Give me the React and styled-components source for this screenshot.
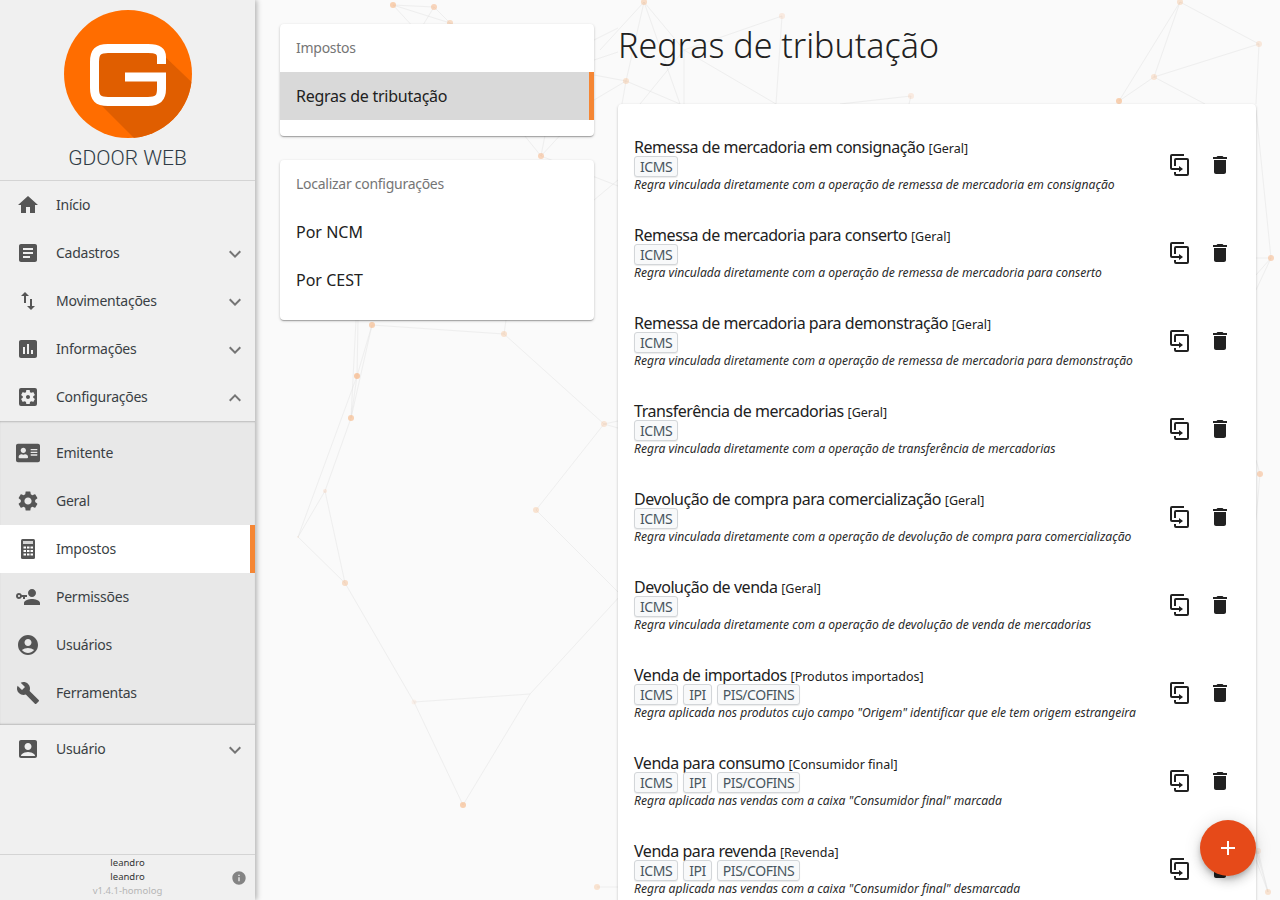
import React from "react";
import styled, { createGlobalStyle } from "styled-components";
import {
  MdHome, MdArticle, MdSwapVert, MdAssessment, MdSettingsApplications, MdSettings,
  MdAccountCircle, MdBuild, MdAccountBox, MdExpandMore, MdExpandLess, MdInfo, MdDelete, MdAdd,
} from "react-icons/md";
import { FaAddressCard } from "react-icons/fa";

const Global = createGlobalStyle`
  html, body { margin: 0; padding: 0; height: 100%; overflow: hidden; }
  body { font-family: "Noto Sans", "Open Sans", sans-serif; color: #212121; background: #fafafa; }
  * { box-sizing: border-box; }
`;

const Shell = styled.div`
  display: flex;
  height: 900px;
  overflow: hidden;
`;

const Sidebar = styled.aside`
  width: 255px;
  flex-shrink: 0;
  height: 100%;
  display: flex;
  flex-direction: column;
  background: #f0f0f0;
  box-shadow: 2px 0 5px rgba(0, 0, 0, 0.28);
  position: relative;
  z-index: 2;
`;

const Brand = styled.div`
  height: 181px;
  padding-top: 10px;
  display: flex;
  flex-direction: column;
  align-items: center;
  border-bottom: 1px solid #d4d4d4;
`;

const BrandName = styled.div`
  margin-top: 8px;
  font-family: Roboto, sans-serif;
  font-weight: 300;
  font-size: 21px;
  line-height: 24px;
  color: #2f3b45;
`;

const MenuRow = styled.div`
  height: 48px;
  display: flex;
  align-items: center;
  padding: 0 8px 0 16px;
  position: relative;
  font-size: 14px;
  color: #3a3f44;
  background: ${(p) => (p.$active ? "#fff" : "transparent")};
  ${(p) => p.$active && "box-shadow: inset -5px 0 0 #f58634;"}
`;

const MenuIcon = styled.span`
  width: 24px;
  height: 24px;
  margin-right: 16px;
  display: flex;
  align-items: center;
  justify-content: center;
  color: #555;
  font-size: 24px;
`;

const MenuLabel = styled.span`
  flex: 1;
  position: relative;
  top: -1px;
  letter-spacing: -0.25px;
`;

const Chevron = styled.span`
  display: flex;
  color: #757575;
  font-size: 24px;
  position: relative;
  top: 1px;
`;

const SubMenu = styled.div`
  background: #e8e8e8;
  padding: 8px 0;
  box-shadow: inset 0 2px 2px -1px rgba(0, 0, 0, 0.2), inset 0 -2px 2px -1px rgba(0, 0, 0, 0.2);
`;

const SideFooter = styled.footer`
  margin-top: auto;
  height: 46px;
  border-top: 1px solid #d4d4d4;
  position: relative;
  text-align: center;
  font-size: 9.5px;
  line-height: 13.5px;
  padding-top: 1px;
  color: #333;
`;

const Version = styled.div`
  margin-top: 1px;
  color: #b5b5b5;
`;

const InfoButton = styled.span`
  position: absolute;
  right: 8px;
  top: 15px;
  display: flex;
  font-size: 16px;
  color: #848484;
`;

const Main = styled.main`
  flex: 1;
  position: relative;
  background: #fafafa;
  overflow: hidden;
  display: grid;
  grid-template-columns: 314px 638px;
  column-gap: 24px;
  padding: 24px 24px 0 25px;
  align-items: start;
`;

const Network = styled.svg`
  position: absolute;
  left: 0;
  top: 0;
  width: 1025px;
  height: 900px;
`;

const SideColumn = styled.div`
  position: relative;
  display: flex;
  flex-direction: column;
  gap: 24px;
`;

const Card = styled.section`
  background: #fff;
  border-radius: 4px;
  box-shadow: 0 1px 3px rgba(0, 0, 0, 0.2), 0 1px 1px rgba(0, 0, 0, 0.14), 0 2px 1px -1px rgba(0, 0, 0, 0.12);
`;

const NavCard = styled(Card)`
  padding-bottom: 16px;
`;

const NavHeader = styled.div`
  height: 48px;
  line-height: 47px;
  padding: 0 16px;
  font-size: 14px;
  letter-spacing: -0.27px;
  color: #757575;
`;

const NavItem = styled.div`
  height: 48px;
  line-height: 49px;
  padding: 0 16px;
  font-size: 16px;
  color: #212121;
  background: ${(p) => (p.$selected ? "#d9d9d9" : "transparent")};
  ${(p) => p.$selected && "letter-spacing: -0.25px; box-shadow: inset -5px 0 0 #f58634;"}
`;

const Content = styled.div`
  position: relative;
`;

const Title = styled.h1`
  margin: 0;
  height: 80px;
  font-family: "Noto Sans", sans-serif;
  font-weight: 300;
  font-size: 34px;
  line-height: 43px;
  color: #212121;
`;

const RulesCard = styled(Card)`
  padding-top: 17px;
  min-height: 830px;
`;

const RuleRow = styled.div`
  height: 88px;
  display: flex;
  align-items: center;
  padding: 0 16px;
`;

const RuleText = styled.div`
  flex: 1;
  min-width: 0;
  padding-bottom: 1px;
`;

const RuleTitle = styled.div`
  height: 20px;
  font-size: 16px;
  line-height: 20px;
  letter-spacing: -0.45px;
  color: #212121;
  white-space: nowrap;
`;

const RuleScope = styled.span`
  font-size: 12.5px;
  line-height: 1;
  letter-spacing: 0;
`;

const TagRow = styled.div`
  display: flex;
  gap: 5px;
  height: 21px;
  margin-top: -1px;
`;

const Tag = styled.span`
  height: 21px;
  padding: 0 5px;
  border: 1px solid #d3d6d9;
  border-radius: 3px;
  background: #f8f9fa;
  box-shadow: 0 1px 1px rgba(0, 0, 0, 0.08);
  font-size: 14px;
  line-height: 19px;
  letter-spacing: -0.45px;
  color: #495660;
`;

const RuleHint = styled.div`
  height: 15px;
  font-size: 12.1px;
  line-height: 15px;
  font-style: italic;
  color: #2a2a2a;
  white-space: nowrap;
`;

const IconButton = styled.button`
  width: 40px;
  height: 40px;
  padding: 0;
  border: 0;
  background: none;
  display: flex;
  align-items: center;
  justify-content: center;
  font-size: 24px;
  color: #212121;
`;

const Fab = styled.button`
  position: absolute;
  right: 24px;
  bottom: 24px;
  width: 56px;
  height: 56px;
  padding: 0;
  border: 0;
  border-radius: 50%;
  background: #e64a19;
  color: #fff;
  font-size: 24px;
  display: flex;
  align-items: center;
  justify-content: center;
  box-shadow: 0 3px 5px -1px rgba(0, 0, 0, 0.2), 0 6px 10px rgba(0, 0, 0, 0.14), 0 1px 18px rgba(0, 0, 0, 0.12);
`;

const Logo = () => (
  <svg width="128" height="128" viewBox="64 10 128 128">
    <defs>
      <clipPath id="logoClip"><circle cx="128" cy="74" r="64" /></clipPath>
    </defs>
    <circle cx="128" cy="74" r="64" fill="#ff6d00" />
    <polygon clipPath="url(#logoClip)" fill="#e05e00" points="158,50 200,90 150,150 142,146 100,104 95,52" />
    <path
      d="M161.500 64V57C161.500 50.500 157 48.500 148 48.500H108C98 48.500 94.500 52 94.500 62V88C94.500 98 98 101.500 108 101.500H148C158 101.500 161.500 98 161.500 89V77H125"
      fill="none"
      stroke="#fff"
      strokeWidth="9"
    />
  </svg>
);

const KeyUser = () => (
  <svg width="24" height="24" viewBox="0 0 24 24" fill="currentColor">
    <path d="M11 10V12H9V14H7V12H5.800C5.400 13.200 4.300 14 3 14C1.300 14 0 12.700 0 11S1.300 8 3 8C4.300 8 5.400 8.800 5.800 10H11M3 10C2.400 10 2 10.400 2 11S2.400 12 3 12 4 11.600 4 11 3.600 10 3 10M16 14C18.700 14 24 15.300 24 18V20H8V18C8 15.300 13.300 14 16 14M16 12C13.800 12 12 10.200 12 8S13.800 4 16 4 20 5.800 20 8 18.200 12 16 12Z" />
  </svg>
);

const CalculatorIcon = () => (
  <svg width="24" height="24" viewBox="0 0 24 24">
    <rect x="5" y="2" width="14" height="20" rx="1.500" fill="currentColor" />
    <rect x="7" y="4" width="10" height="3" fill="#fff" opacity="0.75" />
    {[9, 12.500, 16].map((x) =>
      [9.500, 13, 16.500].map((y) => <rect key={`${x}-${y}`} x={x - 1.500} y={y} width="2.500" height="2" fill="#fff" />)
    )}
  </svg>
);

const CopyIcon = () => (
  <svg width="24" height="24" viewBox="0 0 24 24" fill="currentColor">
    <path d="M11,17H4A2,2 0 0,1 2,15V3A2,2 0 0,1 4,1H16V3H4V15H11V13L15,16L11,19V17M19,21V7H8V13H6V7A2,2 0 0,1 8,5H19A2,2 0 0,1 21,7V21A2,2 0 0,1 19,23H8A2,2 0 0,1 6,21V19H8V21H19Z" />
  </svg>
);

const nodes = [
  [393, 5, 3, 0.7], [434, 7, 3, 0.6], [450, 23, 3, 0.5], [541, 156, 3, 0.6], [372, 325, 3, 0.7],
  [504, 334, 3, 0.4], [357, 376, 3, 0.8], [351, 418, 3, 0.7], [325, 491, 2, 0.25], [298, 537, 1, 0.15],
  [345, 583, 3, 0.5], [414, 702, 2.500, 0.15], [463, 805, 3, 0.7], [536, 510, 3, 0.4], [604, 424, 3, 0.35],
  [621, 595, 3, 0.4], [597, 887, 3, 0.4], [644, 2, 3, 0.5], [782, 16, 3, 0.25], [626, 81, 3, 0.4],
  [911, 96, 3, 0.25], [1180, 2, 3, 0.4], [1259, 44, 3, 0.3], [1154, 77, 3, 0.35], [1119, 101, 3, 0.7],
  [1271, 258, 3, 0.6], [1260, 474, 3, 0.6], [1268, 892, 3, 0.4], [1258, 851, 3, 0.25],
];

const lines = [
  [393, 5, 434, 7], [393, 5, 450, 23], [434, 7, 450, 23], [434, 7, 420, 30], [393, 5, 416, 30], [450, 23, 480, 40],
  [541, 156, 520, 130], [541, 156, 546, 130], [541, 156, 565, 130], [541, 156, 618, 186], [594, 40, 618, 28], [594, 60, 618, 52],
  [594, 75, 626, 81], [594, 100, 626, 81], [594, 200, 618, 180], [644, 2, 600, 50], [644, 2, 626, 81], [644, 2, 680, 104],
  [644, 2, 684, 50], [782, 16, 684, 50], [684, 50, 684, 104], [684, 50, 776, 104], [782, 16, 776, 104], [626, 81, 680, 104],
  [626, 81, 622, 104], [684, 50, 640, 104], [911, 96, 909, 104], [911, 96, 840, 104],
  [1180, 2, 1259, 44], [1180, 2, 1154, 77], [1180, 2, 1119, 101], [1259, 44, 1154, 77], [1259, 44, 1256, 104],
  [1154, 77, 1119, 101], [1154, 77, 1205, 104],
  [372, 325, 357, 376], [372, 325, 351, 418], [358, 320, 357, 376], [356, 320, 351, 418], [357, 376, 351, 418], [351, 418, 325, 491],
  [325, 491, 298, 537], [298, 537, 345, 583], [325, 491, 345, 583], [298, 537, 357, 376], [345, 583, 414, 702],
  [414, 702, 463, 805], [414, 702, 530, 694], [530, 694, 463, 805], [530, 694, 621, 595], [536, 510, 621, 595],
  [536, 510, 604, 424], [604, 424, 504, 334], [372, 325, 504, 334], [504, 334, 506, 320], [604, 424, 618, 421], [604, 424, 618, 428],
  [597, 887, 618, 887], [1271, 258, 1256, 258], [1271, 258, 1256, 275], [1271, 258, 1256, 290], [1271, 258, 1256, 110],
  [1260, 474, 1256, 520], [1260, 474, 1256, 460], [1268, 892, 1258, 851], [1268, 892, 1256, 860], [1268, 892, 1256, 850],
];

const hint = "Regra vinculada diretamente com a operação de ";
const rules = [
  { title: "Remessa de mercadoria em consignação", scope: "Geral", tags: ["ICMS"], text: hint + "remessa de mercadoria em consignação" },
  { title: "Remessa de mercadoria para conserto", scope: "Geral", tags: ["ICMS"], text: hint + "remessa de mercadoria para conserto" },
  { title: "Remessa de mercadoria para demonstração", scope: "Geral", tags: ["ICMS"], text: hint + "remessa de mercadoria para demonstração" },
  { title: "Transferência de mercadorias", scope: "Geral", tags: ["ICMS"], text: hint + "transferência de mercadorias" },
  { title: "Devolução de compra para comercialização", scope: "Geral", tags: ["ICMS"], text: hint + "devolução de compra para comercialização" },
  { title: "Devolução de venda", scope: "Geral", tags: ["ICMS"], text: hint + "devolução de venda de mercadorias" },
  { title: "Venda de importados", scope: "Produtos importados", tags: ["ICMS", "IPI", "PIS/COFINS"], text: 'Regra aplicada nos produtos cujo campo "Origem" identificar que ele tem origem estrangeira' },
  { title: "Venda para consumo", scope: "Consumidor final", tags: ["ICMS", "IPI", "PIS/COFINS"], text: 'Regra aplicada nas vendas com a caixa "Consumidor final" marcada' },
  { title: "Venda para revenda", scope: "Revenda", tags: ["ICMS", "IPI", "PIS/COFINS"], text: 'Regra aplicada nas vendas com a caixa "Consumidor final" desmarcada' },
];

const Item = ({ icon, label, arrow, active }) => (
  <MenuRow $active={active}>
    <MenuIcon>{icon}</MenuIcon>
    <MenuLabel>{label}</MenuLabel>
    {arrow && <Chevron>{arrow === "up" ? <MdExpandLess /> : <MdExpandMore />}</Chevron>}
  </MenuRow>
);

export default function App() {
  return (
    <Shell>
      <Global />
      <Sidebar>
        <Brand>
          <Logo />
          <BrandName>GDOOR WEB</BrandName>
        </Brand>
        <Item icon={<MdHome />} label="Início" />
        <Item icon={<MdArticle />} label="Cadastros" arrow="down" />
        <Item icon={<MdSwapVert />} label="Movimentações" arrow="down" />
        <Item icon={<MdAssessment />} label="Informações" arrow="down" />
        <Item icon={<MdSettingsApplications />} label="Configurações" arrow="up" />
        <SubMenu>
          <Item icon={<FaAddressCard />} label="Emitente" />
          <Item icon={<MdSettings />} label="Geral" />
          <Item icon={<CalculatorIcon />} label="Impostos" active />
          <Item icon={<KeyUser />} label="Permissões" />
          <Item icon={<MdAccountCircle />} label="Usuários" />
          <Item icon={<MdBuild />} label="Ferramentas" />
        </SubMenu>
        <Item icon={<MdAccountBox />} label="Usuário" arrow="down" />
        <SideFooter>
          <div>leandro</div>
          <div>leandro</div>
          <Version>v1.4.1-homolog</Version>
          <InfoButton><MdInfo /></InfoButton>
        </SideFooter>
      </Sidebar>
      <Main>
        <Network viewBox="255 0 1025 900">
          {lines.map((l, i) => (
            <line key={i} x1={l[0]} y1={l[1]} x2={l[2]} y2={l[3]} stroke="#e4e4e4" strokeWidth="1" opacity="0.5" />
          ))}
          {nodes.map((n, i) => (
            <circle key={i} cx={n[0]} cy={n[1]} r={n[2]} fill="#f6bd92" opacity={n[3]} />
          ))}
        </Network>
        <SideColumn>
          <NavCard>
            <NavHeader>Impostos</NavHeader>
            <NavItem $selected>Regras de tributação</NavItem>
          </NavCard>
          <NavCard>
            <NavHeader>Localizar configurações</NavHeader>
            <NavItem>Por NCM</NavItem>
            <NavItem>Por CEST</NavItem>
          </NavCard>
        </SideColumn>
        <Content>
          <Title>Regras de tributação</Title>
          <RulesCard>
            {rules.map((r) => (
              <RuleRow key={r.title}>
                <RuleText>
                  <RuleTitle>{r.title} <RuleScope>[{r.scope}]</RuleScope></RuleTitle>
                  <TagRow>{r.tags.map((t) => <Tag key={t}>{t}</Tag>)}</TagRow>
                  <RuleHint>{r.text}</RuleHint>
                </RuleText>
                <IconButton><CopyIcon /></IconButton>
                <IconButton><MdDelete /></IconButton>
              </RuleRow>
            ))}
          </RulesCard>
        </Content>
        <Fab><MdAdd /></Fab>
      </Main>
    </Shell>
  );
}
